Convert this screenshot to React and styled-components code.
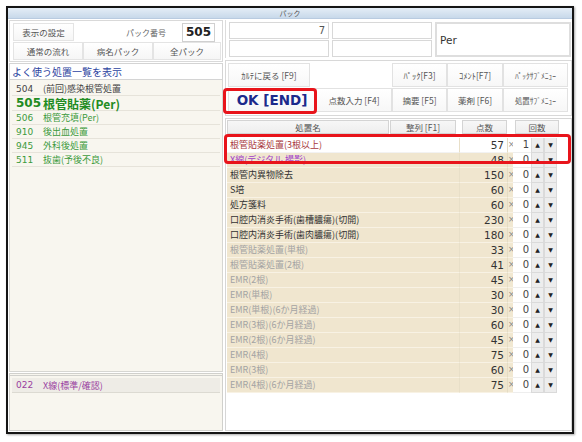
import React from "react";
import styled, { createGlobalStyle } from "styled-components";

const GlobalStyle = createGlobalStyle`
  html, body { margin: 0; padding: 0; background: #fff; }
  body { font-family: "DejaVu Sans", "Noto Sans CJK JP", sans-serif; }
  * { box-sizing: border-box; }
`;

const JP = `"Noto Sans CJK JP", "DejaVu Sans", sans-serif`;
const NUM = `"DejaVu Sans", "Noto Sans CJK JP", sans-serif`;

const favorites = [
  { code: "504", name: "(前回)感染根管処置", tone: "plain" },
  { code: "505", name: "根管貼薬(Per)", tone: "current" },
  { code: "506", name: "根管充填(Per)", tone: "green" },
  { code: "910", name: "後出血処置", tone: "green" },
  { code: "945", name: "外科後処置", tone: "green" },
  { code: "511", name: "抜歯(予後不良)", tone: "green" },
];

const rows = [
  { name: "根管貼薬処置(3根以上)", pts: 57, count: 1, tone: "red" },
  { name: "X線(デジタル 撮影)", pts: 48, count: 0, tone: "purple" },
  { name: "根管内異物除去", pts: 150, count: 0, tone: "dark" },
  { name: "S培", pts: 60, count: 0, tone: "dark" },
  { name: "処方箋料", pts: 60, count: 0, tone: "dark" },
  { name: "口腔内消炎手術(歯槽膿瘍)(切開)", pts: 230, count: 0, tone: "dark" },
  { name: "口腔内消炎手術(歯肉膿瘍)(切開)", pts: 180, count: 0, tone: "dark" },
  { name: "根管貼薬処置(単根)", pts: 33, count: 0, tone: "grey" },
  { name: "根管貼薬処置(2根)", pts: 41, count: 0, tone: "grey" },
  { name: "EMR(2根)", pts: 45, count: 0, tone: "grey" },
  { name: "EMR(単根)", pts: 30, count: 0, tone: "grey" },
  { name: "EMR(単根)(6か月経過)", pts: 30, count: 0, tone: "grey" },
  { name: "EMR(3根)(6か月経過)", pts: 60, count: 0, tone: "grey" },
  { name: "EMR(2根)(6か月経過)", pts: 45, count: 0, tone: "grey" },
  { name: "EMR(4根)", pts: 75, count: 0, tone: "grey" },
  { name: "EMR(3根)", pts: 60, count: 0, tone: "grey" },
  { name: "EMR(4根)(6か月経過)", pts: 75, count: 0, tone: "grey" },
];

const rowColors = {
  red: "#a8383c",
  purple: "#a03cc8",
  dark: "#333",
  grey: "#a3a3a3",
};

const favColors = {
  plain: "#444",
  current: "#1f8c22",
  green: "#3c9a3c",
};

export default function App() {
  return (
    <Page>
      <GlobalStyle />
      <Window>
        <TitleBar>パック</TitleBar>
        <Body>
          <LeftPanel>
            <TopBox>
              <TopRow>
                <FlatButton w={61}>表示の設定</FlatButton>
                <PackLabel>パック番号</PackLabel>
                <PackNo>505</PackNo>
              </TopRow>
              <TopRow>
                <FlatButton w={70}>通常の流れ</FlatButton>
                <FlatButton w={70}>病名パック</FlatButton>
                <FlatButton w={68}>全パック</FlatButton>
              </TopRow>
            </TopBox>
            <ListHeader>よく使う処置一覧を表示</ListHeader>
            <FavList>
              {favorites.map((f) => (
                <FavRow key={f.code} tone={f.tone}>
                  <FavCode>{f.code}</FavCode>
                  <span>{f.name}</span>
                </FavRow>
              ))}
            </FavList>
            <SubList>
              <SubRow>
                <FavCode>022</FavCode>
                <span>X線(標準/確認)</span>
              </SubRow>
            </SubList>
          </LeftPanel>

          <RightPanel>
            <InputsArea>
              <Field align="right">7</Field>
              <Field />
              <PerBox>Per</PerBox>
              <Field />
              <Field />
            </InputsArea>

            <ButtonGroup>
              <GroupButton w={82}>ｶﾙﾃに戻る [F9]</GroupButton>
              <span />
              <GroupButton>ﾊﾟｯｸ[F3]</GroupButton>
              <GroupButton>ｺﾒﾝﾄ[F7]</GroupButton>
              <GroupButton small>ﾊﾟｯｸｻﾌﾞﾒﾆｭｰ</GroupButton>
              <OkButton>OK [END]</OkButton>
              <GroupButton>点数入力 [F4]</GroupButton>
              <GroupButton>摘要 [F5]</GroupButton>
              <GroupButton>薬剤 [F6]</GroupButton>
              <GroupButton small>処置ｻﾌﾞﾒﾆｭｰ</GroupButton>
            </ButtonGroup>

            <TableBox>
              <HeaderRow>
                <HeadCell w={162}>処置名</HeadCell>
                <HeadCell w={66} ml={1}>整列 [F1]</HeadCell>
                <HeadCell w={45} ml={6}>点数</HeadCell>
                <HeadCell w={44} ml={8}>回数</HeadCell>
              </HeaderRow>
              <Rows>
                {rows.map((r, i) => (
                  <Row key={i}>
                    <NameCell hl={i === 0} tone={r.tone}>{r.name}</NameCell>
                    <PtsCell hl={i === 0}>{r.pts}</PtsCell>
                    <TimesCell hl={i === 0}>×</TimesCell>
                    <CountCell>{r.count}</CountCell>
                    <Spin>▲</Spin>
                    <Spin>▼</Spin>
                  </Row>
                ))}
                <Highlight />
              </Rows>
            </TableBox>
          </RightPanel>
        </Body>
      </Window>
    </Page>
  );
}

const Page = styled.div`
  width: 582px;
  height: 442px;
  padding: 6px 0 0 6px;
  background: #fff;
`;

const Window = styled.div`
  width: 568px;
  height: 428px;
  border: 2px solid #151515;
  background: #fff;
  display: flex;
  flex-direction: column;
  box-shadow: 1px 1px 2px rgba(0, 0, 0, 0.35);
`;

const TitleBar = styled.div`
  height: 11px;
  line-height: 11px;
  background: linear-gradient(#e4edf6, #c8d9ea);
  border-bottom: 1px solid #b9cbe0;
  text-align: center;
  font-family: ${JP};
  font-size: 7px;
  color: #555;
`;

const Body = styled.div`
  flex: 1;
  display: flex;
  gap: 2px;
  padding: 1px 0 1px 1px;
  min-height: 0;
`;

const LeftPanel = styled.div`
  width: 214px;
  display: flex;
  flex-direction: column;
`;

const TopBox = styled.div`
  border: 1px solid #d9d9d9;
  padding: 2px 0 1px 3px;
  display: flex;
  flex-direction: column;
  gap: 1px;
`;

const TopRow = styled.div`
  display: flex;
  align-items: center;
  height: 18px;
`;

const FlatButton = styled.div`
  width: ${(p) => p.w}px;
  height: 18px;
  border: 1px solid #e4e4e4;
  background: linear-gradient(#ffffff, #f6f6f6);
  font-family: ${JP};
  font-size: 8.5px;
  color: #555;
  display: flex;
  align-items: center;
  justify-content: center;
`;

const PackLabel = styled.div`
  flex: 1;
  text-align: right;
  padding-right: 16px;
  font-family: ${JP};
  font-size: 8px;
  color: #666;
`;

const PackNo = styled.div`
  width: 33px;
  height: 19px;
  margin-right: 7px;
  border: 1px solid #d0d0d0;
  background: #fff;
  font-family: ${NUM};
  font-weight: bold;
  font-size: 12px;
  color: #222;
  display: flex;
  align-items: center;
  justify-content: center;
`;

const ListHeader = styled.div`
  margin-top: 1px;
  height: 17px;
  border: 1px solid #d4d4d4;
  background: #fff;
  padding-left: 2px;
  font-family: ${JP};
  font-size: 10px;
  color: #2c43a0;
  display: flex;
  align-items: center;
`;

const FavList = styled.div`
  flex: 1;
  background: #f8f6ef;
  border: 1px solid #d6d6d2;
  border-top: none;
  padding: 2px 2px 0 2px;
`;

const FavRow = styled.div`
  display: flex;
  align-items: center;
  height: ${(p) => (p.tone === "current" ? 15 : 14)}px;
  border-bottom: 1px solid #e6e3da;
  font-family: ${JP};
  font-size: ${(p) => (p.tone === "current" ? 12 : 9)}px;
  font-weight: ${(p) => (p.tone === "current" ? "bold" : "normal")};
  color: ${(p) => favColors[p.tone]};
  span { white-space: nowrap; }
`;

const FavCode = styled.span`
  flex: 0 0 31px;
  padding-left: 4px;
  font-family: ${NUM};
`;

const SubList = styled.div`
  height: 58px;
  margin-top: 1px;
  border: 1px solid #d0d0cc;
  border-top: 3px double #d0d0cc;
  background: #f8f6ef;
  padding: 2px 2px 0 2px;
`;

const SubRow = styled.div`
  display: flex;
  align-items: center;
  height: 15px;
  background: #eeece6;
  border-bottom: 1px solid #dcdad2;
  font-family: ${JP};
  font-size: 9px;
  color: #9a3ea0;
`;

const RightPanel = styled.div`
  flex: 1;
  display: flex;
  flex-direction: column;
  gap: 2px;
  min-width: 0;
`;

const InputsArea = styled.div`
  display: grid;
  grid-template-columns: 100px 100px 1fr;
  grid-template-rows: 17px 17px;
  column-gap: 3px;
  row-gap: 1px;
  padding: 2px 1px 1px 3px;
  border-left: 1px solid #dcdcdc;
`;

const Field = styled.div`
  border: 1px solid #d8d8d8;
  background: #fff;
  font-family: ${NUM};
  font-size: 10px;
  color: #555;
  text-align: ${(p) => p.align || "left"};
  padding: 0 3px;
  line-height: 15px;
`;

const PerBox = styled.div`
  grid-row: 1 / span 2;
  grid-column: 3;
  border: 2px solid #dedede;
  font-family: ${NUM};
  font-size: 10.5px;
  color: #333;
  display: flex;
  align-items: center;
  padding-left: 3px;
`;

const ButtonGroup = styled.div`
  display: grid;
  grid-template-columns: 88px 76px 55px 56px 65px;
  grid-template-rows: 24px 24px;
  row-gap: 1px;
  padding: 2px 2px 3px 2px;
  border: 1px solid #d8d8d8;
  position: relative;
`;

const GroupButton = styled.div`
  width: ${(p) => (p.w ? `${p.w}px` : "auto")};
  border: 1px solid #e2e2e2;
  background: linear-gradient(#ffffff, #f7f7f7);
  font-family: ${JP};
  font-size: ${(p) => (p.small ? 7.5 : 8.5)}px;
  color: #555;
  display: flex;
  align-items: center;
  justify-content: center;
  white-space: nowrap;
`;

const OkButton = styled(GroupButton)`
  font-family: ${NUM};
  font-weight: bold;
  font-size: 13.5px;
  color: #1c2a8c;
  position: relative;
  &::after {
    content: "";
    position: absolute;
    left: -6px;
    top: -1px;
    right: -2px;
    bottom: -3px;
    border: 3px solid #e8141b;
    border-radius: 4px;
  }
`;

const TableBox = styled.div`
  flex: 1;
  border: 1px solid #d6d6d6;
  background: #fff;
  padding: 1px 0 0 1px;
`;

const HeaderRow = styled.div`
  display: flex;
  height: 14px;
`;

const HeadCell = styled.div`
  width: ${(p) => p.w}px;
  margin-left: ${(p) => p.ml || 0}px;
  border: 1px solid #d4d4d4;
  background: linear-gradient(#f7f7f7, #eeeeee);
  font-family: ${JP};
  font-size: 8.5px;
  color: #555;
  display: flex;
  align-items: center;
  justify-content: center;
`;

const Rows = styled.div`
  position: relative;
  margin-top: 4px;
`;

const Row = styled.div`
  display: grid;
  grid-template-columns: 233px 47px 6px 18px 13px 13px;
  height: 15px;
`;

const NameCell = styled.div`
  background: ${(p) => (p.hl ? "#fff" : "#f0e6cf")};
  border-bottom: 1px solid ${(p) => (p.hl ? "#f2f2f2" : "#f8f2e4")};
  border-right: 1px solid #e8dfc8;
  padding-left: 3px;
  font-family: ${JP};
  font-size: 9px;
  line-height: 14px;
  color: ${(p) => rowColors[p.tone]};
  white-space: nowrap;
  overflow: hidden;
`;

const PtsCell = styled.div`
  background: ${(p) => (p.hl ? "#fff" : "#f0e6cf")};
  border-bottom: 1px solid ${(p) => (p.hl ? "#f2f2f2" : "#f8f2e4")};
  text-align: right;
  padding-right: 3px;
  font-family: ${NUM};
  font-size: 10.5px;
  line-height: 14px;
  color: #333;
`;

const TimesCell = styled.div`
  background: ${(p) => (p.hl ? "#fff" : "#f1e8d2")};
  border-left: 1px solid #e4dcc4;
  border-bottom: 1px solid #f8f2e4;
  font-family: ${NUM};
  font-size: 8px;
  line-height: 14px;
  color: #888;
  text-align: center;
`;

const CountCell = styled.div`
  background: #fff;
  border-bottom: 1px solid #eee;
  text-align: right;
  padding-right: 2px;
  font-family: ${NUM};
  font-size: 10px;
  line-height: 14px;
  color: #444;
`;

const Spin = styled.div`
  background: #ededed;
  border: 1px solid #dadada;
  border-top: none;
  font-size: 6px;
  line-height: 14px;
  text-align: center;
  color: #222;
`;

const Highlight = styled.div`
  position: absolute;
  left: -3px;
  top: -4px;
  width: 347px;
  height: 30px;
  border: 3px solid #e8141b;
  border-radius: 4px;
  pointer-events: none;
`;
